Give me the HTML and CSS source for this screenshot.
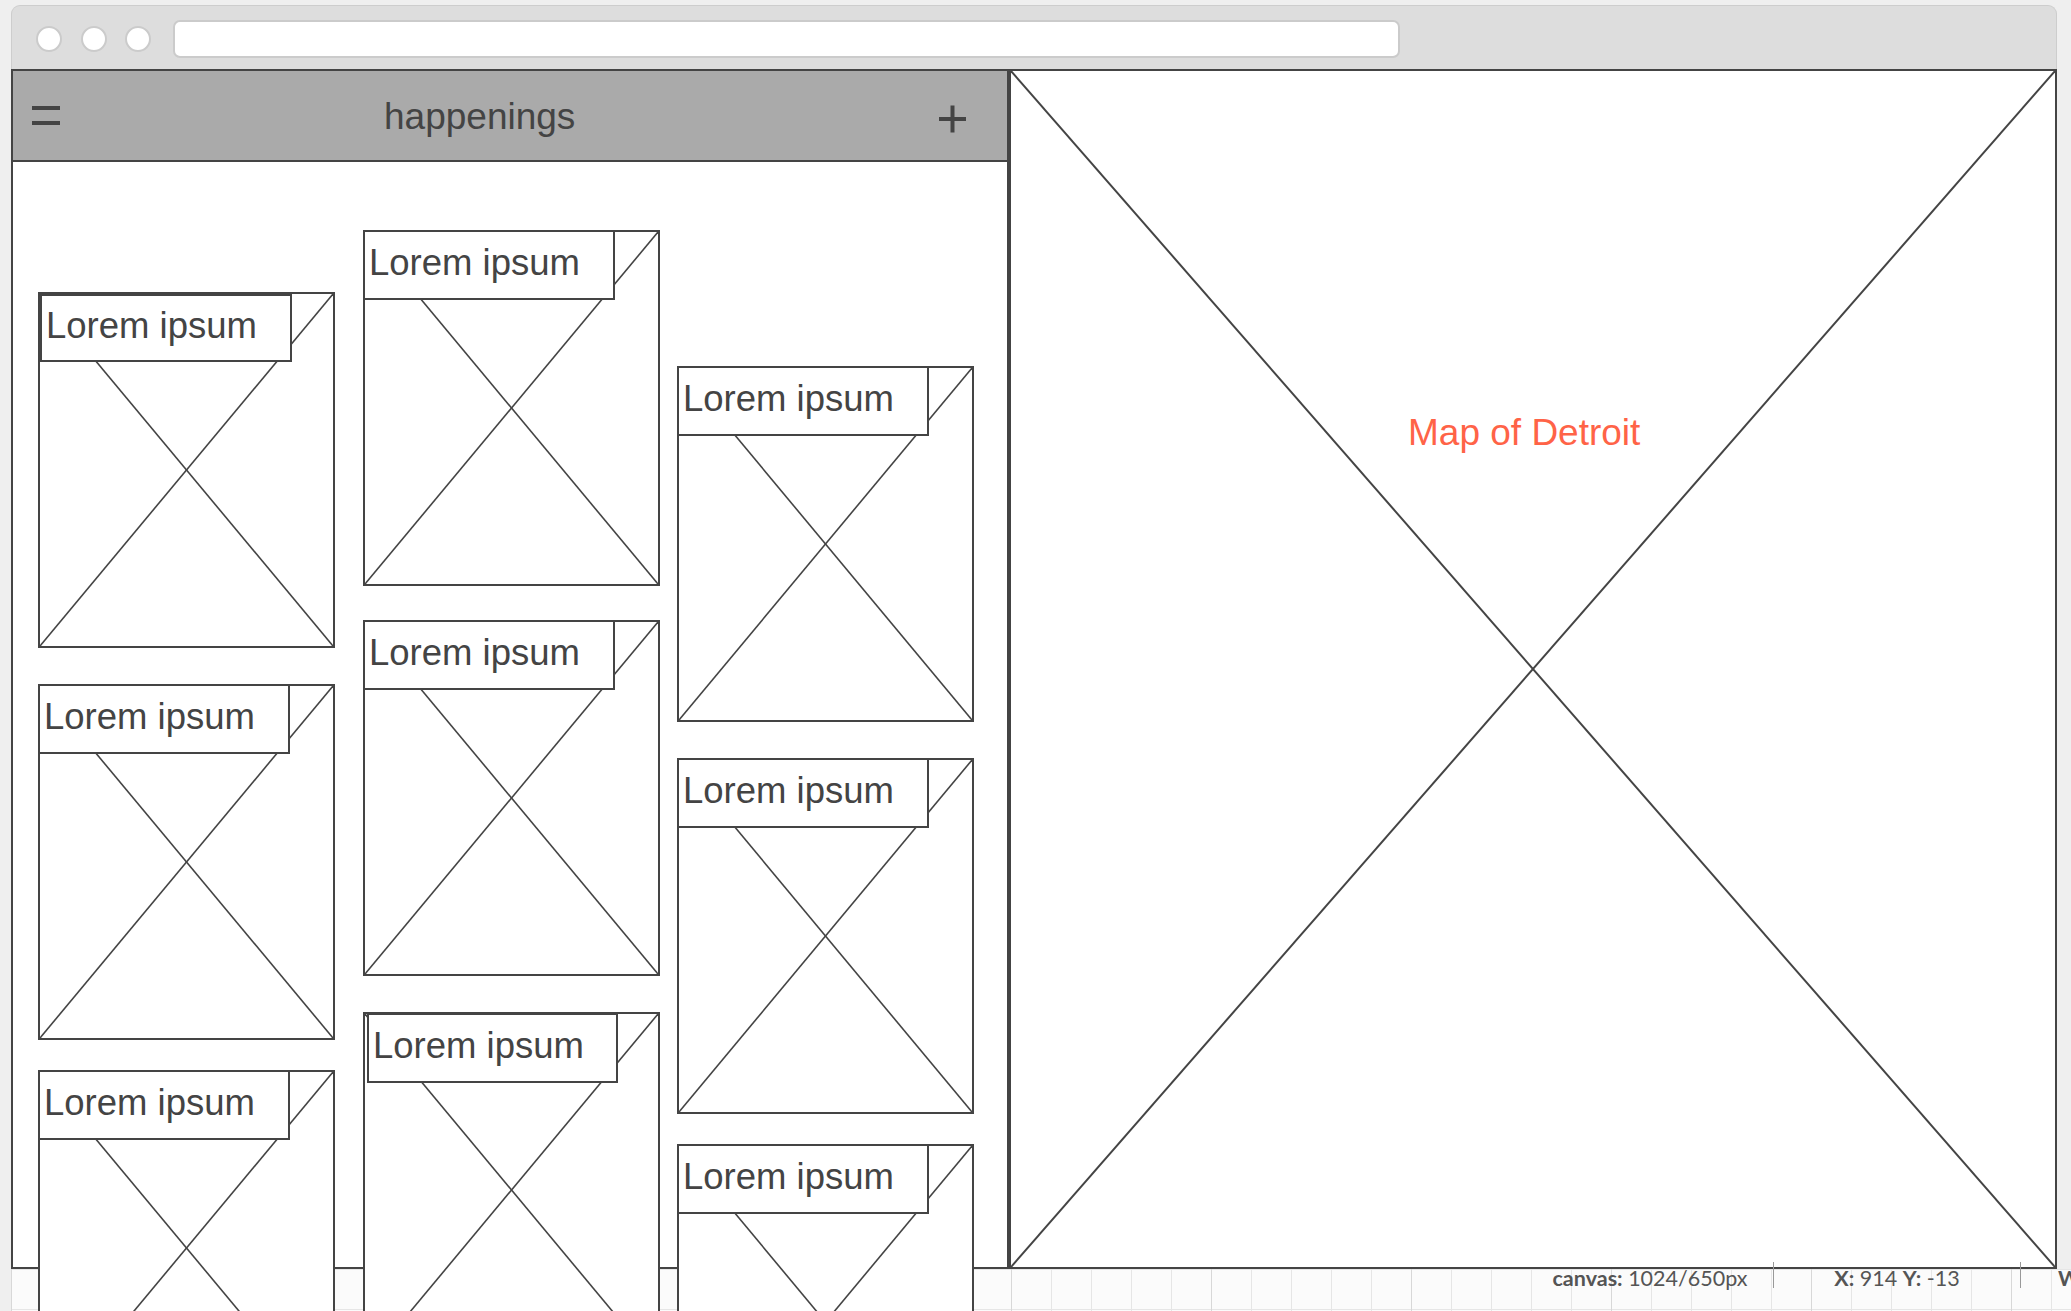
FILE: index.html
```html
<!DOCTYPE html>
<html lang="en">
<head>
<meta charset="utf-8">
<title>happenings</title>
<link rel="stylesheet" href="styles.css">
</head>
<body>
<div class="window">
  <div class="toolbar">
    <span class="dot"></span><span class="dot"></span><span class="dot"></span>
    <div class="url"></div>
  </div>
  <div class="content">
    <section class="panel">
      <header class="appbar">
        <span class="menu"></span>
        <h1 class="title">happenings</h1>
        <svg class="plus" width="29" height="28" viewBox="0 0 29 28"><path d="M14.5 0.5V27.5M1 14H28" stroke="#444" stroke-width="4" fill="none"/></svg>
      </header>
      <div class="cards">
        <div class="col col-1">
          <div class="card"><svg class="xbox" viewBox="0 0 100 100" preserveAspectRatio="none"><line x1="0" y1="0" x2="100" y2="100" vector-effect="non-scaling-stroke"/><line x1="100" y1="0" x2="0" y2="100" vector-effect="non-scaling-stroke"/></svg><div class="label label--inset">Lorem ipsum</div></div>
          <div class="card"><svg class="xbox" viewBox="0 0 100 100" preserveAspectRatio="none"><line x1="0" y1="0" x2="100" y2="100" vector-effect="non-scaling-stroke"/><line x1="100" y1="0" x2="0" y2="100" vector-effect="non-scaling-stroke"/></svg><div class="label">Lorem ipsum</div></div>
          <div class="card card--up"><svg class="xbox" viewBox="0 0 100 100" preserveAspectRatio="none"><line x1="0" y1="0" x2="100" y2="100" vector-effect="non-scaling-stroke"/><line x1="100" y1="0" x2="0" y2="100" vector-effect="non-scaling-stroke"/></svg><div class="label">Lorem ipsum</div></div>
        </div>
        <div class="col col-2">
          <div class="card"><svg class="xbox" viewBox="0 0 100 100" preserveAspectRatio="none"><line x1="0" y1="0" x2="100" y2="100" vector-effect="non-scaling-stroke"/><line x1="100" y1="0" x2="0" y2="100" vector-effect="non-scaling-stroke"/></svg><div class="label">Lorem ipsum</div></div>
          <div class="card card--up2"><svg class="xbox" viewBox="0 0 100 100" preserveAspectRatio="none"><line x1="0" y1="0" x2="100" y2="100" vector-effect="non-scaling-stroke"/><line x1="100" y1="0" x2="0" y2="100" vector-effect="non-scaling-stroke"/></svg><div class="label">Lorem ipsum</div></div>
          <div class="card"><svg class="xbox" viewBox="0 0 100 100" preserveAspectRatio="none"><line x1="0" y1="0" x2="100" y2="100" vector-effect="non-scaling-stroke"/><line x1="100" y1="0" x2="0" y2="100" vector-effect="non-scaling-stroke"/></svg><div class="label label--shift">Lorem ipsum</div></div>
        </div>
        <div class="col col-3">
          <div class="card"><svg class="xbox" viewBox="0 0 100 100" preserveAspectRatio="none"><line x1="0" y1="0" x2="100" y2="100" vector-effect="non-scaling-stroke"/><line x1="100" y1="0" x2="0" y2="100" vector-effect="non-scaling-stroke"/></svg><div class="label">Lorem ipsum</div></div>
          <div class="card"><svg class="xbox" viewBox="0 0 100 100" preserveAspectRatio="none"><line x1="0" y1="0" x2="100" y2="100" vector-effect="non-scaling-stroke"/><line x1="100" y1="0" x2="0" y2="100" vector-effect="non-scaling-stroke"/></svg><div class="label">Lorem ipsum</div></div>
          <div class="card card--up"><svg class="xbox" viewBox="0 0 100 100" preserveAspectRatio="none"><line x1="0" y1="0" x2="100" y2="100" vector-effect="non-scaling-stroke"/><line x1="100" y1="0" x2="0" y2="100" vector-effect="non-scaling-stroke"/></svg><div class="label">Lorem ipsum</div></div>
        </div>
      </div>
    </section>
    <section class="map">
      <svg class="xbox" viewBox="0 0 100 100" preserveAspectRatio="none"><line x1="0" y1="0" x2="100" y2="100" vector-effect="non-scaling-stroke"/><line x1="100" y1="0" x2="0" y2="100" vector-effect="non-scaling-stroke"/></svg>
      <p class="map-label">Map of Detroit</p>
    </section>
  </div>
</div>
<footer class="status">
  <div class="cell"><b>canvas:</b> 1024/650px</div>
  <span class="sep"></span>
  <div class="cell"><b>X:</b> 914 <b>Y:</b> -13</div>
  <span class="sep"></span>
  <div class="cell cell--last"><b>W</b></div>
</footer>
</body>
</html>
```
FILE: styles.css
```css
html, body {
  margin: 0;
  padding: 0;
}
body {
  width: 2071px;
  height: 1311px;
  overflow: hidden;
  background: #efefef;
  font-family: "Liberation Sans", Arial, sans-serif;
  color: #444;
}

/* browser chrome */
.window {
  margin: 5px 0 0 11px;
  width: 2046px;
}
.toolbar {
  box-sizing: border-box;
  height: 64px;
  display: flex;
  align-items: center;
  padding: 14px 0 11px 24px;
  background: #dddddd;
  border: 1px solid #cdcdcd;
  border-bottom: 0;
  border-radius: 9px 9px 0 0;
}
.dot {
  box-sizing: border-box;
  width: 26px;
  height: 26px;
  border-radius: 50%;
  background: #fff;
  border: 2px solid #cbcbcb;
  flex: none;
}
.dot + .dot {
  margin-left: 18.5px;
}
.url {
  box-sizing: border-box;
  width: 1227px;
  height: 38px;
  margin-left: 22px;
  background: #fff;
  border: 2px solid #cbcbcb;
  border-radius: 7px;
}

/* main content */
.content {
  display: flex;
  height: 1200px;
}
.panel {
  box-sizing: border-box;
  width: 1000px;
  flex: none;
  background: #fff;
  border-left: 2px solid #444;
  border-right: 4px solid #444;
  border-bottom: 2px solid #444;
}
.appbar {
  box-sizing: border-box;
  height: 93px;
  display: flex;
  align-items: center;
  padding: 0 40px 0 19px;
  background: #aaaaaa;
  border-top: 2px solid #444;
  border-bottom: 2px solid #444;
}
.menu {
  box-sizing: border-box;
  width: 28px;
  height: 19px;
  border-top: 4px solid #444;
  border-bottom: 4px solid #444;
  flex: none;
}
.title {
  margin: 2px 0 0 324px;
  font-size: 37px;
  line-height: 41px;
  font-weight: normal;
  color: #444;
}
.plus {
  display: block;
  margin: 7px 0 0 auto;
  flex: none;
}

/* cards */
.cards {
  position: relative;
  z-index: 1;
  display: flex;
  align-items: flex-start;
  padding-left: 25px;
}
.col {
  display: flex;
  flex-direction: column;
  gap: 36px;
}
.col-1 {
  margin-top: 130px;
  margin-right: 28px;
}
.col-2 {
  margin-top: 68px;
  margin-right: 17px;
}
.col-3 {
  margin-top: 204px;
}
.card {
  box-sizing: border-box;
  width: 297px;
  height: 356px;
  display: grid;
  background: #fff;
  border: 2px solid #444;
}
.card--up {
  margin-top: -6px;
}
.card--up2 {
  margin-top: -2px;
}
.card > *,
.map > * {
  grid-area: 1 / 1;
}
.xbox {
  display: block;
  width: 100%;
  height: 100%;
  stroke: #444;
  stroke-width: 1.6;
  fill: none;
}
.label {
  box-sizing: border-box;
  align-self: start;
  justify-self: start;
  width: 252px;
  height: 70px;
  margin: -2px 0 0 -2px;
  padding-left: 4px;
  background: #fff;
  border: 2px solid #444;
  font-size: 36.5px;
  line-height: 62px;
  white-space: nowrap;
  color: #444;
}
.label--inset {
  margin: 0;
  height: 68px;
  line-height: 60px;
}
.label--shift {
  margin: -1px 0 0 2px;
  width: 251px;
}

/* map */
.map {
  box-sizing: border-box;
  flex: 1;
  display: grid;
  background: #fff;
  border: 2px solid #444;
  border-left: 0;
}
.map .xbox {
  stroke-width: 2;
}
.map-label {
  align-self: start;
  justify-self: start;
  margin: 341px 0 0 397px;
  font-size: 37px;
  line-height: 41px;
  color: #ff6347;
  white-space: nowrap;
}

/* status bar */
.status {
  box-sizing: border-box;
  height: 42px;
  margin-left: 11px;
  display: flex;
  align-items: flex-start;
  padding: 0 0 0 1516px;
  background-color: #fbfbfb;
  background-image:
    linear-gradient(to right, #d8d8d8 1px, transparent 1px),
    linear-gradient(to right, #e6e6e6 1px, transparent 1px),
    linear-gradient(to bottom, #e6e6e6 1px, transparent 1px);
  background-size: 200px 100%, 40px 100%, 100% 40px;
  background-position: 0 0, 0 0, 0 0;
  font-family: Lato, "Liberation Sans", sans-serif;
  font-size: 21.5px;
  line-height: 18px;
  color: #555;
  white-space: nowrap;
}
.cell {
  width: 246px;
  flex: none;
  text-align: center;
}
.cell b {
  font-weight: bold;
}
.cell--last {
  width: auto;
  padding-left: 37px;
  text-align: left;
}
.sep {
  width: 1px;
  height: 26px;
  margin-top: -7px;
  background: #999;
  flex: none;
}
```
